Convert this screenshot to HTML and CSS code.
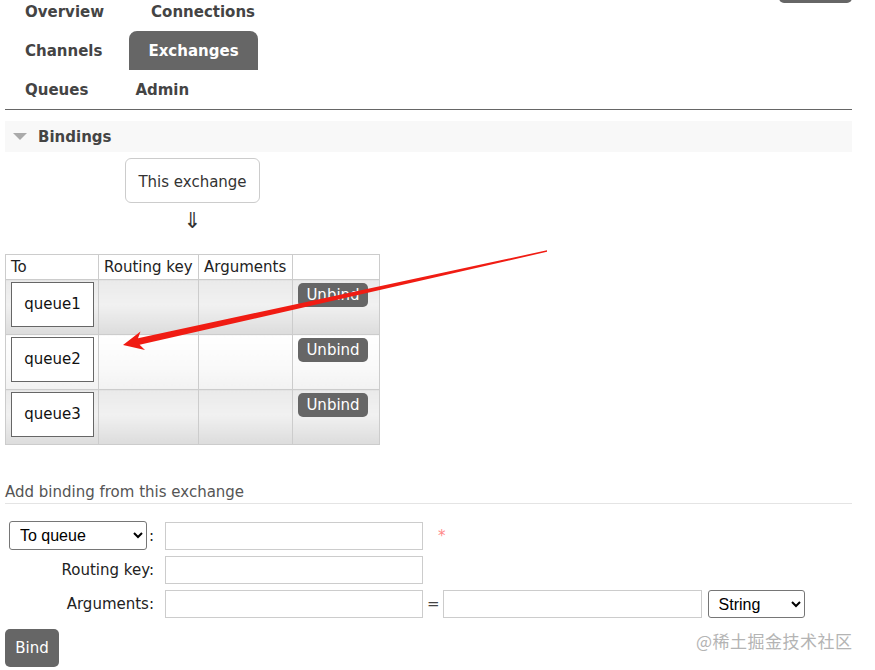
FILE: index.html
```html
<!DOCTYPE html>
<html lang="en">
<head>
    <meta charset="UTF-8">
    <title>Exchanges - RabbitMQ Management</title>
    <link rel="stylesheet" href="styles.css">
</head>
<body>
    <a href="#" class="logout-btn" title="Log out"></a>

    <div class="page">
        <div class="nav">
            <div class="nav-row">
                <a href="#" class="nav-item">Overview</a>
                <a href="#" class="nav-item">Connections</a>
            </div>
            <div class="nav-row">
                <a href="#" class="nav-item">Channels</a>
                <a href="#" class="nav-item selected">Exchanges</a>
            </div>
            <div class="nav-row">
                <a href="#" class="nav-item">Queues</a>
                <a href="#" class="nav-item">Admin</a>
            </div>
        </div>

        <div class="section-head">
            <span class="triangle"></span>
            <h2>Bindings</h2>
        </div>

        <div class="this-exchange">
            <span class="box">This exchange</span>
            <div class="down-arrow">&#8659;</div>
        </div>

        <table class="bindings">
            <thead>
                <tr>
                    <th class="col-to">To</th>
                    <th class="col-key">Routing key</th>
                    <th class="col-args">Arguments</th>
                    <th class="col-action"></th>
                </tr>
            </thead>
            <tbody>
                <tr class="alt1">
                    <td><span class="queue">queue1</span></td>
                    <td></td>
                    <td></td>
                    <td><button class="btn">Unbind</button></td>
                </tr>
                <tr class="alt2">
                    <td><span class="queue">queue2</span></td>
                    <td></td>
                    <td></td>
                    <td><button class="btn">Unbind</button></td>
                </tr>
                <tr class="alt1">
                    <td><span class="queue">queue3</span></td>
                    <td></td>
                    <td></td>
                    <td><button class="btn">Unbind</button></td>
                </tr>
            </tbody>
        </table>

        <h3 class="form-title">Add binding from this exchange</h3>

        <form class="bind-form">
            <div class="form-row">
                <label class="form-label">
                    <select class="select dest-type">
                        <option>To queue</option>
                        <option>To exchange</option>
                    </select>
                    <span>:</span>
                </label>
                <input type="text" class="text-input">
                <span class="mand">*</span>
            </div>
            <div class="form-row">
                <label class="form-label">Routing key:</label>
                <input type="text" class="text-input">
            </div>
            <div class="form-row">
                <label class="form-label">Arguments:</label>
                <input type="text" class="text-input">
                <span class="equals">=</span>
                <input type="text" class="text-input">
                <select class="select arg-type">
                    <option>String</option>
                    <option>Number</option>
                    <option>Boolean</option>
                </select>
            </div>
            <button type="button" class="btn bind-btn">Bind</button>
        </form>
    </div>

    <!-- annotation drawn over the screenshot -->
    <svg class="annotation" width="875" height="670" viewBox="0 0 875 670">
        <polygon fill="#f01c13"
            points="123,345 140.5,331.5 138,338.2 547,250.3 547,251.8 139.6,344.8 145,350"/>
    </svg>

    <div class="watermark">@稀土掘金技术社区</div>
</body>
</html>
```

FILE: styles.css
```css
:root {
    --dark-grey: #666;
    --line: #ccc;
    --text: #222;
}

body {
    margin: 0;
    font-family: 'DejaVu Sans', Verdana, sans-serif;
    font-size: 15px;
    color: var(--text);
    background: #fff;
}

.page {
    padding: 0 23px 0 5px;
}

.logout-btn {
    position: absolute;
    top: -25px;
    left: 779px;
    width: 73px;
    height: 28px;
    background: var(--dark-grey);
    border-radius: 5px;
}

/* nav tabs */
.nav {
    margin-top: -8px;
    border-bottom: 1px solid var(--dark-grey);
}

.nav-row {
    display: flex;
    height: 39px;
}

.nav-item {
    display: flex;
    align-items: center;
    padding: 0 20px;
    margin-right: 7px;
    font-weight: bold;
    color: #444;
    text-decoration: none;
    border-radius: 8px 8px 0 0;
}

.nav-item.selected {
    background: var(--dark-grey);
    color: #fff;
    padding: 0 19px;
}

/* section header */
.section-head {
    display: flex;
    align-items: center;
    height: 31px;
    margin-top: 11px;
    background: #f8f8f8;
}

.triangle {
    width: 0;
    height: 0;
    margin: 0 11px 0 8px;
    border-left: 7px solid transparent;
    border-right: 7px solid transparent;
    border-top: 7px solid #aaa;
}

.section-head h2 {
    margin: 0;
    font-size: 15px;
    color: #444;
}

.this-exchange {
    width: 135px;
    margin: 6px 0 0 120px;
    text-align: center;
}

.this-exchange .box {
    display: block;
    height: 43px;
    line-height: 47px;
    border: 1px solid var(--line);
    border-radius: 6px;
    color: #333;
}

.down-arrow {
    height: 36px;
    font-size: 22px;
    line-height: 36px;
    color: #333;
}

/* bindings table */
.bindings {
    margin-top: 15px;
    border-collapse: collapse;
}

.bindings th,
.bindings td {
    border: 1px solid var(--line);
    padding: 0;
    vertical-align: top;
}

.bindings th {
    height: 24px;
    padding: 0 5px;
    text-align: left;
    font-weight: normal;
    white-space: nowrap;
    line-height: 24px;
}

.col-to { width: 82px; }
.col-key { width: 89px; }
.col-args { width: 83px; }
.col-action { width: 76px; }

.bindings td {
    height: 54px;
}

.bindings tr.alt1 td {
    background: linear-gradient(#eaeaea, #f1f1f1 45%, #dcdcdc);
}

.bindings tr.alt2 td {
    background: linear-gradient(#fff, #f9f9f9 60%, #f2f2f2);
}

.queue {
    display: block;
    width: 81px;
    height: 43px;
    margin: 2px 0 0 5px;
    line-height: 43px;
    text-align: center;
    background: #fff;
    border: 1px solid var(--dark-grey);
    color: #111;
}

.btn {
    border: none;
    border-radius: 5px;
    background: var(--dark-grey);
    color: #fff;
    font-family: 'DejaVu Sans', Verdana, sans-serif;
    font-size: 15px;
    cursor: pointer;
}

.bindings .btn {
    width: 70px;
    height: 24px;
    margin: 3px 0 0 5px;
    padding: 0;
}

/* add binding form */
.form-title {
    margin: 38px 0 0;
    padding-bottom: 2px;
    border-bottom: 1px solid #e4e4e4;
    font-size: 15px;
    font-weight: normal;
    color: #555;
}

.bind-form {
    margin-top: 17px;
}

.form-row {
    display: flex;
    align-items: center;
    margin-bottom: 6px;
}

.form-label {
    display: flex;
    align-items: center;
    justify-content: flex-end;
    gap: 2px;
    width: 149px;
    padding-right: 6px;
    color: #222;
}

.select {
    height: 29px;
    border: 1px solid #767676;
    border-radius: 3px;
    background: #fff;
    font-family: 'Liberation Sans', Arial, sans-serif;
    font-size: 16px;
    color: #000;
    padding: 0 4px 0 6px;
}

.dest-type {
    width: 138px;
}

.arg-type {
    width: 97px;
    height: 28px;
    margin-left: 6px;
}

.text-input {
    width: 258px;
    height: 28px;
    box-sizing: border-box;
    margin-left: 5px;
    border: 1px solid var(--line);
    padding: 2px 4px;
    font-size: 15px;
}

.form-row .equals {
    margin: 0 3px 0 4px;
    color: #444;
}

.equals + .text-input {
    margin-left: 0;
    width: 259px;
}

.mand {
    margin-left: 15px;
    color: #f88;
}

.bind-btn {
    width: 54px;
    height: 38px;
    margin-top: 5px;
}

.annotation {
    position: absolute;
    top: 0;
    left: 0;
    pointer-events: none;
}

.watermark {
    position: absolute;
    top: 628px;
    left: 696px;
    font-family: 'Noto Sans CJK SC', sans-serif;
    font-size: 17px;
    color: #b4b4b4;
    letter-spacing: 0.5px;
}
```
